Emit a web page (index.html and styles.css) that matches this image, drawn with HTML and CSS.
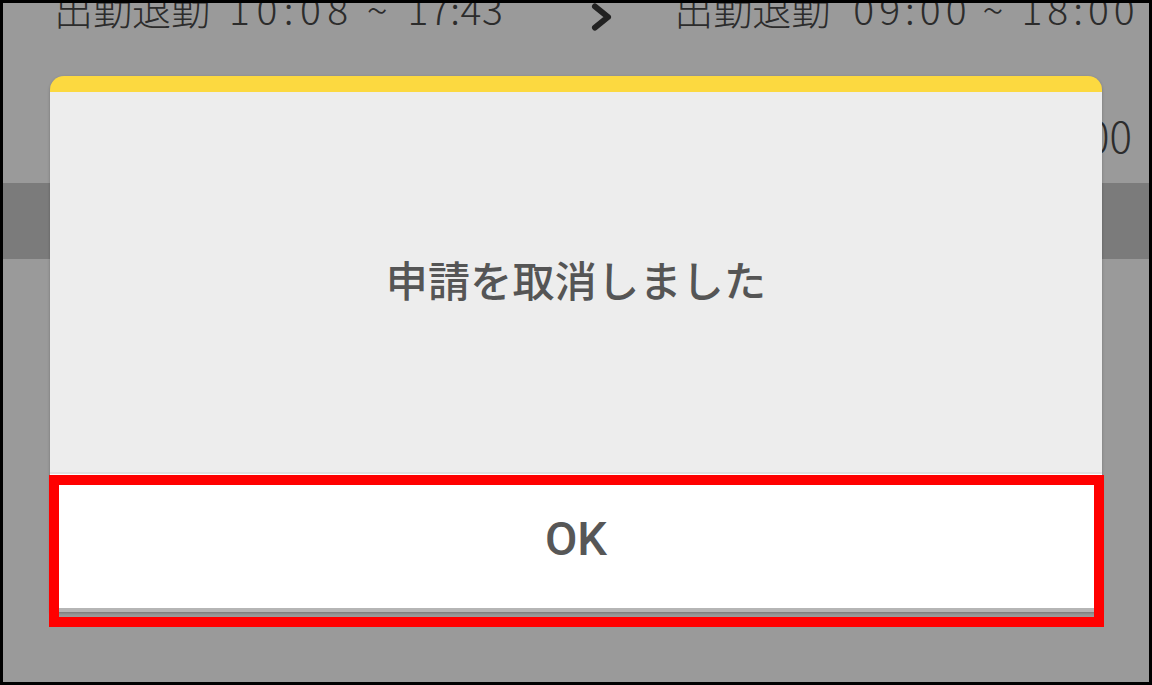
FILE: index.html
```html
<!DOCTYPE html>
<html lang="ja">
<head>
<meta charset="utf-8">
<link rel="stylesheet" href="styles.css">
</head>
<body>
<div class="frame">
  <div class="row row-top">
    <span class="lbl lbl-first">出勤退勤</span>
    <span class="tm tm-a">10:08</span>
    <span class="tl tl-a">~</span>
    <span class="tm tm-b">17:43</span>
    <svg class="chev" width="24" height="28" viewBox="0 0 24 28"><path d="M5 3.5 L18 14 L5 24.5" fill="none" stroke="#222" stroke-width="6" stroke-linecap="round" stroke-linejoin="round"/></svg>
    <span class="lbl lbl-second">出勤退勤</span>
    <span class="tm tm-c">09:00</span>
    <span class="tl tl-b">~</span>
    <span class="tm tm-d">18:00</span>
  </div>
  <div class="row row-second">
    <span class="tm2">09:00 ~ 18:00</span>
  </div>
  <div class="band"></div>

  <div class="dialog">
    <div class="dialog-head"></div>
    <div class="dialog-body">申請を取消しました</div>
    <div class="dialog-btn">OK</div>
  </div>
  <div class="highlight"></div>
</div>
</body>
</html>
```
FILE: styles.css
```css
* { box-sizing: border-box; }
html, body { margin: 0; padding: 0; background: #fff; }
.frame {
  position: relative;
  width: 1152px;
  height: 685px;
  border: 3px solid #000;
  background: #9a9a9a;
  overflow: hidden;
  font-family: "Noto Sans CJK JP", "Noto Sans", sans-serif;
}
.row {
  display: flex;
  align-items: center;
  color: #2c2c2c;
  font-weight: 300;
  white-space: nowrap;
}
.row-top {
  height: 39px;
  line-height: 39px;
  font-size: 39px;
  margin-top: -14px;
  padding-left: 51px;
}
.tm { letter-spacing: 5px; }
.tm-a { margin-left: 19px; letter-spacing: 6.5px; }
.tl-a { margin-left: 12px; }
.tm-b { margin-left: 20px; letter-spacing: 0.5px; }
.chev { margin-left: 87px; margin-top: 16px; flex: none; }
.lbl-second { margin-left: 60px; }
.tm-c { margin-left: 23px; }
.tl-b { margin-left: 11px; }
.tm-d { margin-left: 18px; }

.row-second {
  height: 42px;
  line-height: 42px;
  font-size: 42px;
  margin-top: 86px;
  justify-content: flex-end;
  padding-right: 17px;
}
.band {
  margin-top: 27px;
  height: 76px;
  background: #7b7b7b;
}
.dialog {
  position: absolute;
  left: 47px;
  top: 73px;
  width: 1052px;
  display: flex;
  flex-direction: column;
  box-shadow: 0 1px 3px rgba(0,0,0,0.25);
  border-radius: 14px 14px 0 0;
}
.dialog-head {
  height: 16px;
  background: #fcd940;
  border-radius: 14px 14px 0 0;
}
.dialog-body {
  height: 382px;
  background: #ededed;
  display: flex;
  align-items: center;
  justify-content: center;
  padding-bottom: 8px;
  color: #555;
  font-size: 42px;
  font-weight: 500;
  letter-spacing: 0.3px;
  border-bottom: 2px solid #e0e0e0;
}
.dialog-btn {
  height: 138px;
  background: #fff;
  display: flex;
  align-items: center;
  justify-content: center;
  padding-bottom: 6px;
  color: #575757;
  font-family: Roboto, "Noto Sans", sans-serif;
  font-size: 47px;
  font-weight: 500;
  border-bottom: 4px solid #b5b5b5;
}
.highlight {
  position: absolute;
  left: 46px;
  top: 472px;
  width: 1055px;
  height: 152px;
  border: 10px solid #ff0000;
}
```
